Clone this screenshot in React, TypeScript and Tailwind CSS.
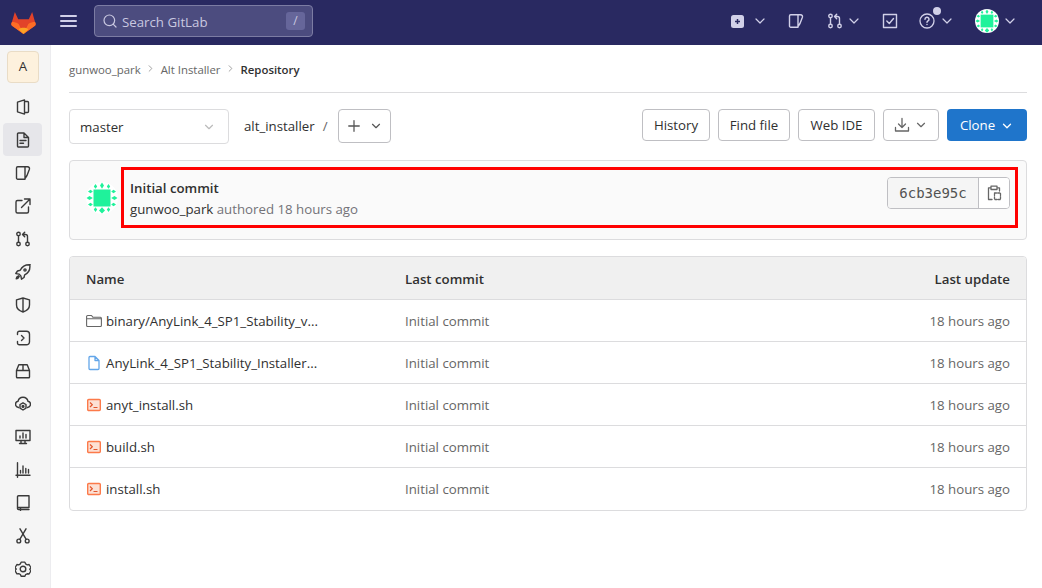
import type { ReactNode } from "react";
import { ChevronDown, ChevronRight, Plus, Search } from "lucide-react";

function Icon({ children, size = 16, className = "" }: { children: ReactNode; size?: number; className?: string }) {
  return (
    <svg
      width={size}
      height={size}
      viewBox="0 0 16 16"
      fill="none"
      stroke="currentColor"
      strokeWidth={1.4}
      strokeLinecap="round"
      strokeLinejoin="round"
      className={`shrink-0 ${className}`}
    >
      {children}
    </svg>
  );
}

const mrPaths = (
  <>
    <circle cx="3.5" cy="3" r="1.75" />
    <circle cx="3.5" cy="13" r="1.75" />
    <circle cx="12.5" cy="13" r="1.75" />
    <path d="M3.500 5v6M12.500 11V5.500a2 2 0 0 0-2-2H8M9.700 1.200 7.500 3.500l2.200 2.200" />
  </>
);
const issuePaths = <path d="M1.500 3A1.200 1.200 0 0 1 2.700 1.800H10V14.200H2.700A1.200 1.200 0 0 1 1.500 13zM10 1.800h2.500c1.500 0 2.300 1 1.900 2.500L12 10.500 10 13.500" />;

function Avatar({ size }: { size: number }) {
  return (
    <svg width={size} height={size} viewBox="0 0 32 32" className="shrink-0">
      <circle cx="16" cy="16" r="16" fill="#fff" />
      <rect x="7.500" y="7.500" width="17" height="17" fill="#1ff29b" />
      <g fill="#1ff29b">
        <path d="M9.500 2l1.700 2.500-1.700 2.300-1.700-2.300zM16 .5l2 3-2 3.300-2-3.300zM22.500 2l1.700 2.500-1.700 2.300-1.700-2.300z" />
        <path d="M9.500 30l1.700-2.500-1.700-2.300-1.700 2.300zM16 31.500l3-3-3-3.300-3 3.300zM22.500 30l1.700-2.500-1.700-2.300-1.700 2.300z" />
        <path d="M.5 16l3-2 3.300 2-3.300 2zM2 9.500l2.500-1.700 2.300 1.700-2.300 1.700zM2 22.500l2.500-1.700 2.300 1.700-2.300 1.700z" />
        <path d="M31.500 16l-3-2-3.300 2 3.300 2zM30 9.500l-2.500-1.700-2.300 1.700 2.300 1.700zM30 22.500l-2.500-1.700-2.300 1.700 2.300 1.700z" />
      </g>
    </svg>
  );
}

const sideIcons: { active?: boolean; icon: ReactNode }[] = [
  { icon: <path d="M2.500 3.200 9.500 .9V15.100L2.500 12.800zM9.500 2.500H12.500a1 1 0 0 1 1 1v9a1 1 0 0 1-1 1H9.500" /> },
  {
    active: true,
    icon: (
      <>
        <path d="M2.500 2a1 1 0 0 1 1-1h5.500l4.500 4.500V14a1 1 0 0 1-1 1h-9a1 1 0 0 1-1-1zM9 1v4.500h4.500" />
        <path d="M5 8.500h6M5 11.200h3.500" />
      </>
    ),
  },
  { icon: issuePaths },
  { icon: <path d="M7 2.500H2.500A1.500 1.500 0 0 0 1 4v9.500A1.500 1.500 0 0 0 2.500 15H12a1.500 1.500 0 0 0 1.500-1.500V9M6.500 9.500 15 1M9.500 1H15v5.500" /> },
  { icon: mrPaths },
  {
    icon: (
      <>
        <path d="M15.200.8c-4.500-.300-8 1.500-10 5.500L2.500 7 .8 9.500l3.200.600 1.900 1.900.600 3.200 2.500-1.700.700-2.700c4-2 5.700-5.500 5.100-10z" />
        <path d="M3.500 11.800c-1.300.500-2.200 2-2.300 3 1 0 2.500-1 3-2.300" />
        <circle cx="10" cy="6" r="1.100" />
      </>
    ),
  },
  { icon: <path d="M8 1 14.500 2.800V8c0 3.200-2.800 5.800-6.500 7C4.300 13.800 1.500 11.200 1.500 8V2.800zM8 1v14" /> },
  {
    icon: (
      <>
        <path d="M2.500 4.500V3A1.800 1.800 0 0 1 4.300 1.200H11.500A3 3 0 0 1 14.500 4.200v7.600a3 3 0 0 1-3 3H4.300A1.800 1.800 0 0 1 2.500 13v-1.500" />
        <path d="M6.500 5.500 9 8 6.500 10.500" />
      </>
    ),
  },
  { icon: <path d="M1.500 7.500 3.800 1.800H12.200L14.500 7.500V14a.8.8 0 0 1-.8.8H2.300a.8.8 0 0 1-.8-.8zM1.500 7.500H14.500M8 1.800V7.500" /> },
  {
    icon: (
      <>
        <path d="M3.500 11.500C1.500 11 .5 9.500.5 8.200c0-1.500 1-2.700 2.500-2.900C3.500 3 5.700 1.200 8 1.200s4.500 1.800 5 4.100c1.500.2 2.500 1.400 2.500 2.900 0 1.300-1 2.800-3 3.300" />
        <path d="M8 6.800l3 1.700v3.700l-3 1.800-3-1.800V8.500z" />
        <circle cx="8" cy="10.400" r=".9" />
      </>
    ),
  },
  {
    icon: (
      <>
        <path d="M1 1.500h14v10H1zM4.500 14.500h7M6 11.500v3M10 11.500v3" />
        <path d="M5 9V7M8 9V4M11 9V5.500" />
      </>
    ),
  },
  { icon: <path d="M2.500.8v14.400M1 13.200h14M5.500 11V8.500M8 11V4M10.800 11V6.500M13.500 11V7.500" /> },
  { icon: <path d="M2.500 1.800a1 1 0 0 1 1-1h10.500v11.700H3.500a1 1 0 0 0-1 1zM2.500 13.500a1 1 0 0 0 1 1H14M5.500 12.500v3" /> },
  {
    icon: (
      <>
        <circle cx="3.800" cy="13" r="1.900" />
        <circle cx="12.200" cy="13" r="1.900" />
        <path d="M4.800 11.300 11 .8M11.200 11.300 5 .8" />
      </>
    ),
  },
  {
    icon: (
      <>
        <path d="M6 1h4l.700 1.800 1.800 1 1.900-.300 2 3.400-1.300 1.500v.200l1.300 1.500-2 3.400-1.900-.300-1.800 1L10 15.800H6l-.700-1.800-1.800-1-1.900.300-2-3.400L.900 8.400v-.200L-.4 6.900l2-3.400 1.900.300 1.800-1z" transform="translate(.4 .2) scale(.95)" />
        <circle cx="8" cy="8" r="2.800" />
      </>
    ),
  },
];

const files = [
  { name: "binary/AnyLink_4_SP1_Stability_v...", kind: "folder" },
  { name: "AnyLink_4_SP1_Stability_Installer...", kind: "file" },
  { name: "anyt_install.sh", kind: "shell" },
  { name: "build.sh", kind: "shell" },
  { name: "install.sh", kind: "shell" },
];

function FileIcon({ kind }: { kind: string }) {
  if (kind === "folder") {
    return (
      <Icon className="text-[#666]" size={16}>
        <path d="M.6 3.500a1 1 0 0 1 1-1h3.900l1.500 1.800h7.400a1 1 0 0 1 1 1v7.200a1 1 0 0 1-1 1H1.600a1 1 0 0 1-1-1zM.6 5.800h14.800" strokeWidth={1.100} />
      </Icon>
    );
  }
  if (kind === "file") {
    return (
      <Icon className="text-[#63a6e9]" size={16}>
        <path d="M3 2.500a1 1 0 0 1 1-1h5l4 4v8a1 1 0 0 1-1 1H4a1 1 0 0 1-1-1zM9 1.500v4h4" strokeWidth={1.300} />
      </Icon>
    );
  }
  return (
    <svg width="16" height="16" viewBox="0 0 16 16" className="shrink-0">
      <rect x="1.700" y="2.500" width="12.600" height="11" rx="1" fill="#fce0d4" stroke="#fc7a4a" strokeWidth="1.400" />
      <path d="M4 5.500 6.300 7.800 4 10M7.500 10.500h4" fill="none" stroke="#e2562d" strokeWidth="1.200" />
    </svg>
  );
}

function Btn({ children, className = "" }: { children: ReactNode; className?: string }) {
  return (
    <button className={`h-8 flex items-center justify-center rounded-[4px] border border-[#bfbfc3] bg-white text-[#303030] ${className}`}>
      {children}
    </button>
  );
}

export default function App() {
  return (
    <div className="w-[1042px] h-[588px] overflow-hidden bg-white text-[13.25px] text-[#303030] font-['Open_Sans','Noto_Sans',sans-serif] flex flex-col">
      <header className="h-[45px] shrink-0 bg-[#292961] flex items-center text-[#d1d0e8]">
        <svg width="25" height="25" viewBox="0 0 26 25" className="ml-[11px] shrink-0">
          <path d="M13 24.500 1 16 .5 15c-.500-1 0-2 .500-3L4 1.500 7.500 9h11L22 1.500 25 12c.500 1 1 2 .500 3l-.500 1z" fill="#e24329" />
          <path d="M13 24.500 1 16 .5 15c-.500-1 0-2 .500-3 2.500 0 5 .500 7 2z" fill="#fc6d26" />
          <path d="M13 24.500 25 16l.500-1c.500-1 0-2-.500-3-2.500 0-5 .500-7 2z" fill="#fc6d26" />
          <path d="M13 24.500 8 19.500c3-2 7-2 10 0z" fill="#fca326" />
        </svg>
        <div className="ml-[24px] w-[17px] flex flex-col gap-[3px] shrink-0 -mt-[3px]">
          <span className="h-[2px] bg-[#d1d0e8] rounded-full" />
          <span className="h-[2px] bg-[#d1d0e8] rounded-full" />
          <span className="h-[2px] bg-[#d1d0e8] rounded-full" />
        </div>
        <div className="ml-[17px] w-[219px] h-[32px] -mt-[3px] rounded-[4px] bg-[#4c4c7f] border border-[#7c7ca3] flex items-center pl-[7px] pr-[7px] text-[#c9c8e0]">
          <Search size={16} strokeWidth={1.8} />
          <span className="ml-[4px] pt-[3px]">Search GitLab</span>
          <span className="ml-auto w-[19px] h-[18px] rounded-[3px] bg-[#66669a] flex items-center justify-center text-[12px]">/</span>
        </div>
        <div className="ml-auto flex items-center -mt-[3px]">
          <svg width="13" height="13" viewBox="0 0 13 13" className="shrink-0">
            <rect width="13" height="13" rx="2.500" fill="#d1d0e8" />
            <path d="M6.500 4v5M4 6.500h5" stroke="#292961" strokeWidth="1.500" />
          </svg>
          <ChevronDown size={16} strokeWidth={1.800} className="ml-[8px]" />
          <Icon className="ml-[20px]">{issuePaths}</Icon>
          <Icon className="ml-[23px]">{mrPaths}</Icon>
          <ChevronDown size={16} strokeWidth={1.800} className="ml-[3px]" />
          <Icon className="ml-[20px]">
            <path d="M1.500 1.500h13v13h-13zM4.800 8l2.500 2.500L11.500 5.500" />
          </Icon>
          <div className="relative ml-[21px] flex">
            <Icon>
              <circle cx="8" cy="8" r="7" strokeWidth={1.300} />
              <path d="M6 6.200a2 2 0 1 1 3 1.700c-.600.400-1 .800-1 1.400M8 11.500h.01" strokeWidth={1.500} />
            </Icon>
            <span className="absolute -top-[6px] -right-[6px] w-2 h-2 rounded-full bg-[#d1d0e8]" />
          </div>
          <ChevronDown size={16} strokeWidth={1.800} className="ml-[4px]" />
          <div className="ml-[20px] flex">
            <Avatar size={24} />
          </div>
          <ChevronDown size={16} strokeWidth={1.800} className="ml-[3px] mr-[24px]" />
        </div>
      </header>

      <div className="flex flex-1 min-h-0">
        <aside className="w-[51px] shrink-0 bg-[#f5f5f5] border-r border-[#ececef] flex flex-col items-start">
          <div className="mt-[6px] ml-[7px] w-8 h-8 rounded-[4px] bg-[#fdf1dd] border border-[#e9dcc6] flex items-center justify-center text-[#303030]">A</div>
          <div className="mt-[7px] ml-[3px] flex flex-col items-center text-[#3a3a3a]">
            {sideIcons.map((s, i) => (
              <div key={i} className={`w-[39px] h-[33px] rounded-[4px] flex items-center justify-center ${s.active ? "bg-[#e6e6ea]" : ""}`}>
                <Icon>{s.icon}</Icon>
              </div>
            ))}
          </div>
        </aside>

        <main className="flex-1 min-w-0 pl-[18px] pr-[15px]">
          <div className="h-[48px] pt-[3px] border-b border-[#dcdcde] flex items-center text-[11.4px] text-[#666]">
            <span>gunwoo_park</span>
            <ChevronRight size={11} className="mx-[4.5px] -mt-[4px] text-[#999]" />
            <span>Alt Installer</span>
            <ChevronRight size={11} className="mx-[4.5px] -mt-[4px] text-[#999]" />
            <span className="font-semibold text-[#303030]">Repository</span>
          </div>

          <div className="mt-[16px] flex items-start">
            <div className="w-[160px] h-[35px] rounded-[4px] border border-[#dcdcde] flex items-center justify-between pl-[10px] pr-[12px]">
              <span className="pt-[2px]">master</span>
              <ChevronDown size={14} className="text-[#bbb]" />
            </div>
            <span className="ml-[15px] mt-[8px]">alt_installer</span>
            <span className="ml-[8px] mt-[8px] text-[#666]">/</span>
            <Btn className="ml-[10px] w-[53px] gap-[6px] h-[34px]">
              <Plus size={18} strokeWidth={1.700} className="text-[#555]" />
              <ChevronDown size={14} strokeWidth={2} className="text-[#555]" />
            </Btn>
            <div className="ml-auto flex gap-[8px]">
              <Btn className="w-[68px] pt-[2px]">History</Btn>
              <Btn className="w-[72px] pt-[2px]">Find file</Btn>
              <Btn className="w-[77px] pt-[2px]">Web IDE</Btn>
              <Btn className="w-[56px] gap-[4px]">
                <Icon size={16} className="text-[#666]">
                  <path d="M8 1.500v9M4.500 7 8 10.500 11.500 7M1.500 10.500v3.500h13v-3.500" strokeWidth={1.300} />
                </Icon>
                <ChevronDown size={14} strokeWidth={2} className="text-[#666]" />
              </Btn>
              <button className="w-[80px] h-8 pt-[2px] rounded-[4px] bg-[#1f75cb] text-white flex items-center justify-center gap-[5px]">
                Clone
                <ChevronDown size={14} strokeWidth={2.200} />
              </button>
            </div>
          </div>

          <div className="mt-[16px] h-[80px] rounded-[4px] border border-[#dcdcde] bg-[#fafafa] flex items-center pl-[16px] pr-[8px] pb-[5px]">
            <Avatar size={32} />
            <div className="ml-[3px] flex-1 h-[61px] border-[3px] border-[#ff0000] flex justify-between pl-[6px] pr-[5px]">
              <div className="mt-[8px]">
                <div className="font-semibold leading-[20px]">Initial commit</div>
                <div className="leading-[20px] mt-[1px]">
                  gunwoo_park <span className="text-[#737278]">authored 18 hours ago</span>
                </div>
              </div>
              <div className="flex self-start mt-[7px] h-8 rounded-[4px] border border-[#bfbfc3] overflow-hidden">
                <span className="w-[90px] bg-[#f5f5f5] flex items-center justify-center font-['DejaVu_Sans_Mono',monospace] text-[14px] text-[#525252]">6cb3e95c</span>
                <span className="w-[31px] border-l border-[#bfbfc3] bg-white flex items-center justify-center text-[#666]">
                  <Icon size={16}>
                    <path d="M4.500 2.800H2.500V14.500H6M11.500 2.800h2V6M5 1.200h6V4.500H5z" strokeWidth={1.300} />
                    <path d="M8.500 8h6v6.500h-6z" strokeWidth={1.300} strokeDasharray="2 1.200" />
                  </Icon>
                </span>
              </div>
            </div>
          </div>

          <div className="mt-[16px] rounded-[4px] border border-[#dcdcde] overflow-hidden">
            <div className="h-[43px] pt-[3px] bg-[#f0f0f0] flex items-center px-[16px] font-semibold border-b border-[#dcdcde]">
              <span className="w-[319px]">Name</span>
              <span>Last commit</span>
              <span className="ml-auto">Last update</span>
            </div>
            {files.map((f, i) => (
              <div key={f.name} className={`h-[42px] flex items-center px-[16px] ${i < files.length - 1 ? "border-b border-[#dcdcde]" : ""}`}>
                <div className="w-[319px] flex items-center gap-[4px]">
                  <FileIcon kind={f.kind} />
                  <span className="pt-[2px]">{f.name}</span>
                </div>
                <span className="pt-[2px] text-[#666]">Initial commit</span>
                <span className="ml-auto pt-[2px] text-[#666]">18 hours ago</span>
              </div>
            ))}
          </div>
        </main>
      </div>
    </div>
  );
}
